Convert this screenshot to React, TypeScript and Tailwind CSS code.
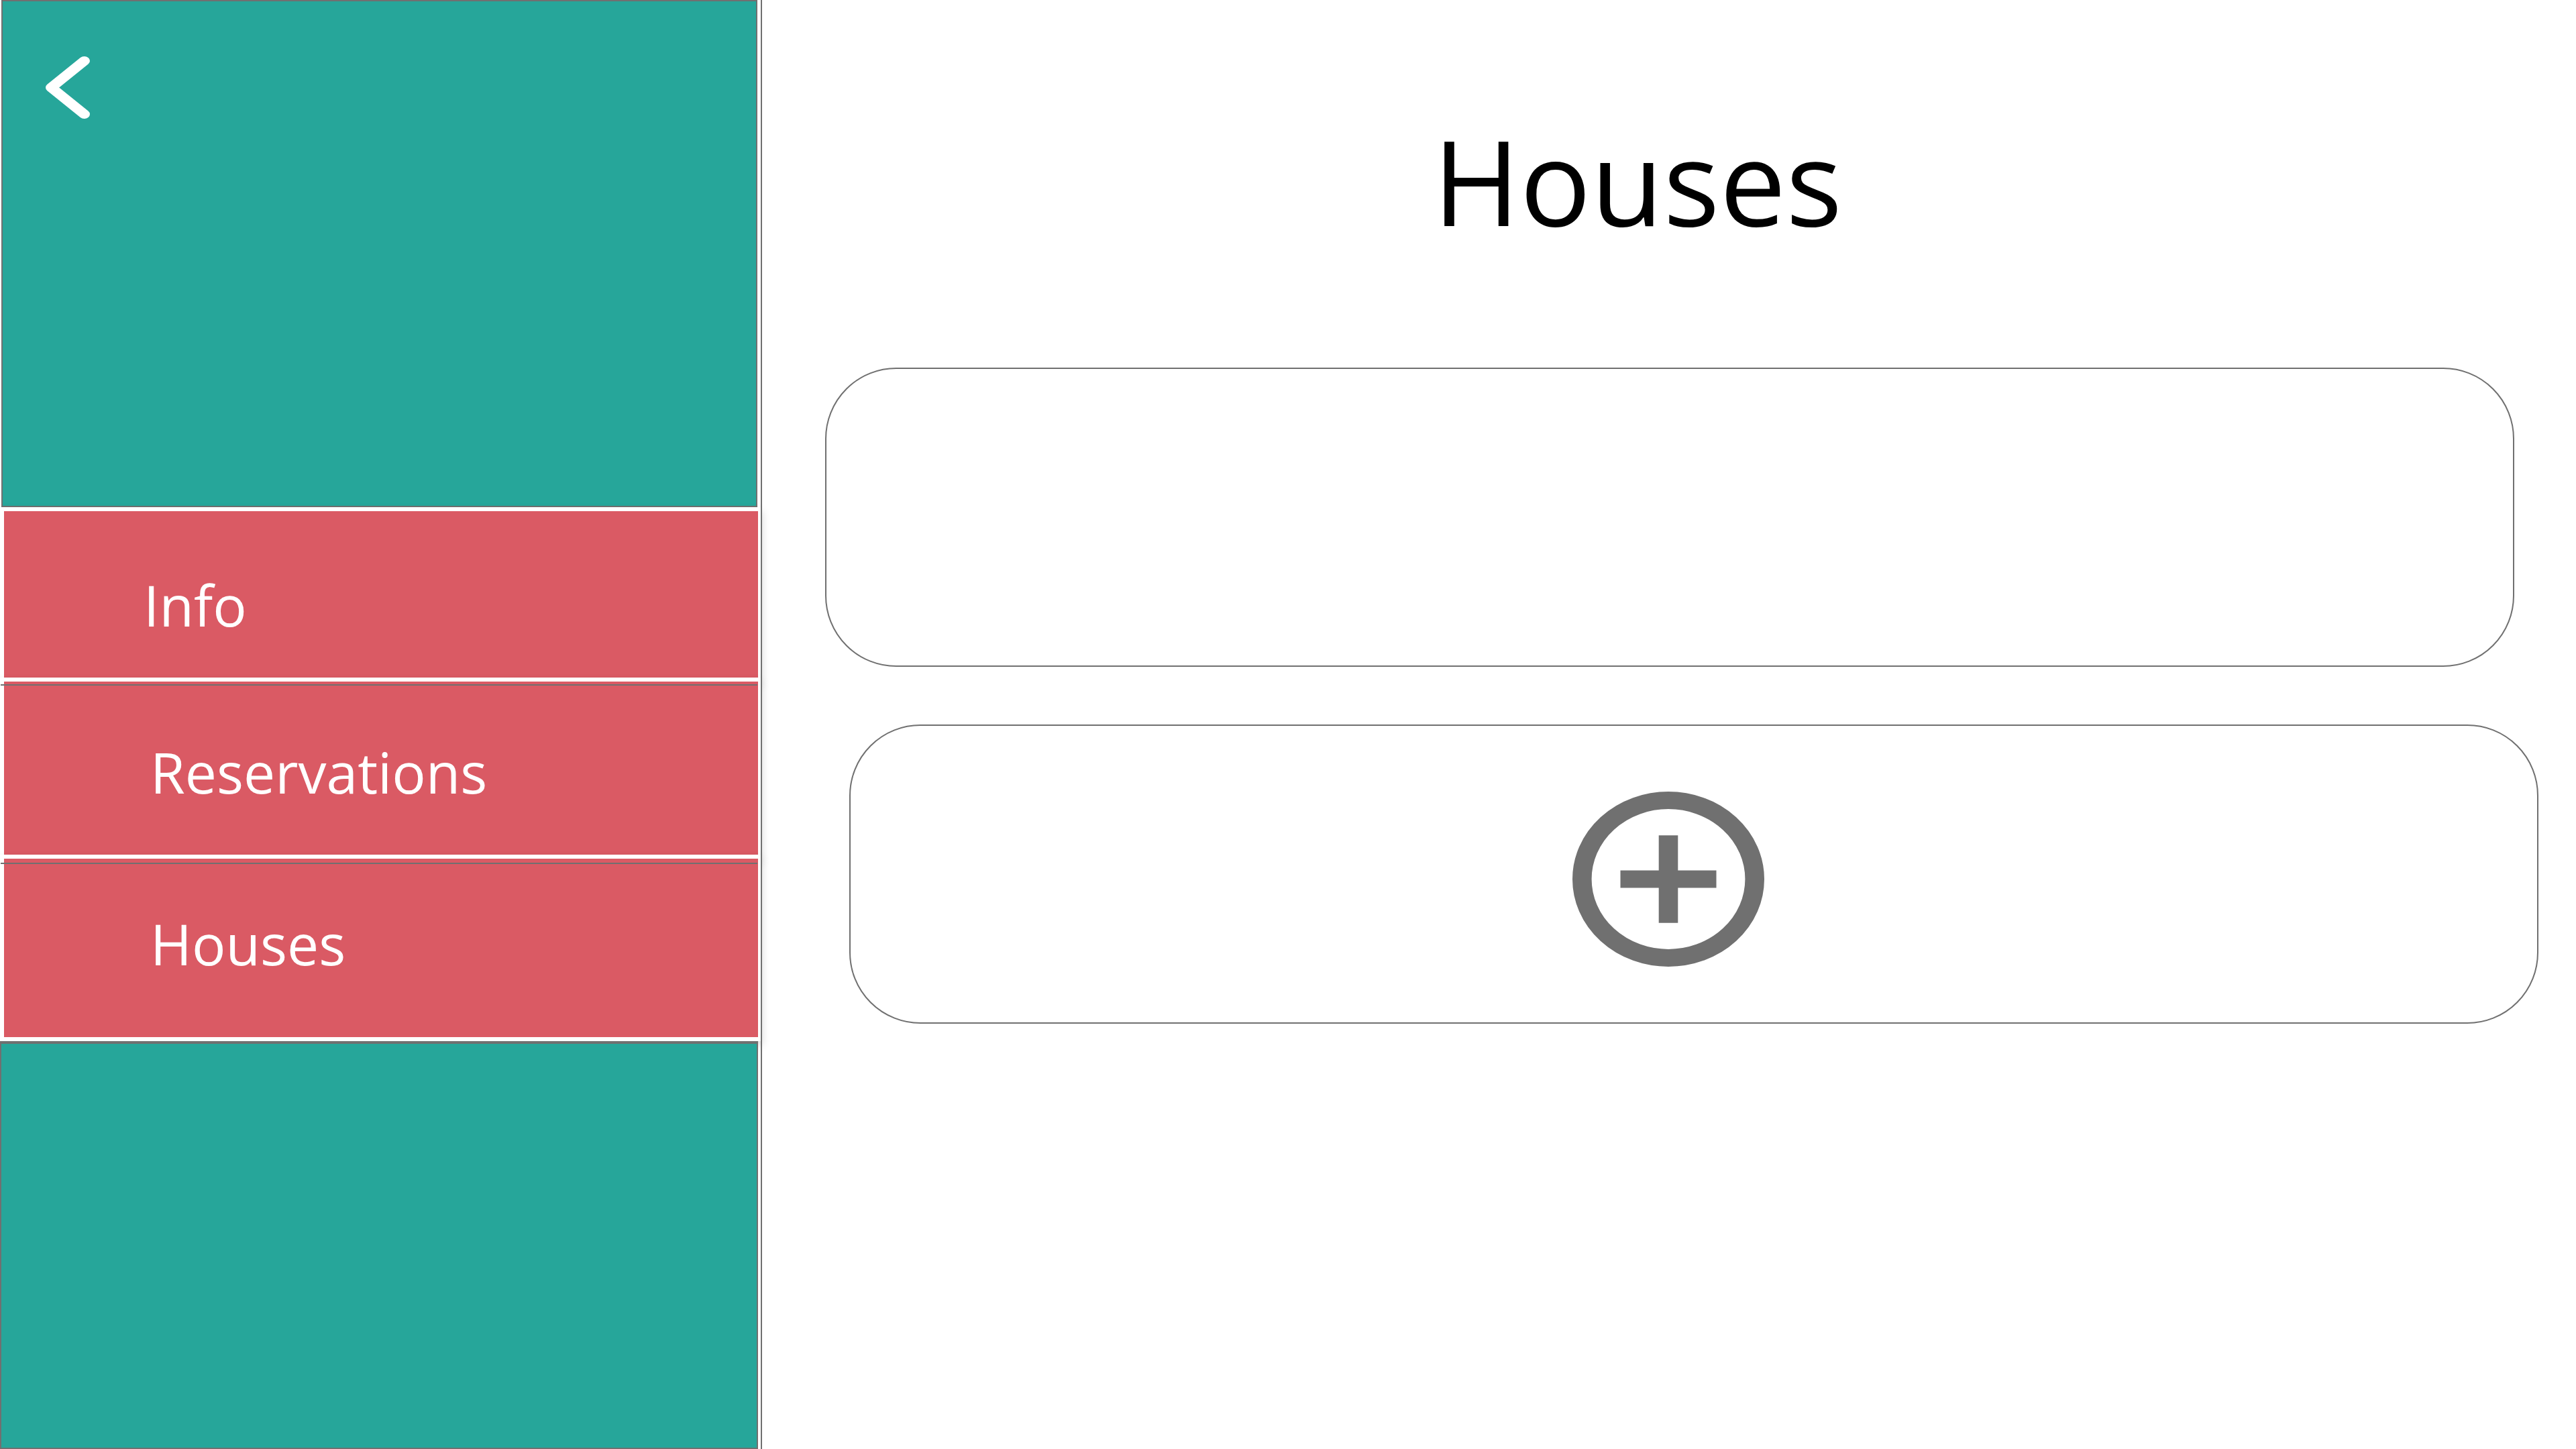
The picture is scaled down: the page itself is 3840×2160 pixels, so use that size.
type NavItem = {
  label: string;
  box: string;
  rule?: string;
};

const navItems: NavItem[] = [
  { label: "Info", box: "h-[260px] pl-[208px] pt-[32px]" },
  { label: "Reservations", box: "-mt-[6px] h-[270px] pl-[218px] pt-[12px]", rule: "top-[4px]" },
  { label: "Houses", box: "-mt-[6px] h-[278px] pl-[218px] pb-[12px]", rule: "top-[6px]" },
];

function BackIcon() {
  return (
    <svg className="h-[93px] w-[66px]" viewBox="0 0 53 93" preserveAspectRatio="none" fill="none" aria-hidden="true">
      <path
        d="M46.3 6.7 6.7 46.5 46.3 86.3"
        stroke="white"
        strokeWidth="13.4"
        strokeLinecap="round"
        strokeLinejoin="round"
      />
    </svg>
  );
}

function AddIcon() {
  return (
    <svg className="h-[261px] w-[286px]" viewBox="0 0 20 20" preserveAspectRatio="none" aria-hidden="true">
      <circle cx="10" cy="10" r="9" fill="none" stroke="#707070" strokeWidth="2" />
      <path d="M9 5h2v4h4v2h-4v4H9v-4H5V9h4z" fill="#707070" />
    </svg>
  );
}

function Sidebar() {
  return (
    <aside className="flex w-[1134px] shrink-0 flex-col">
      <div className="ml-[2px] mr-[5px] h-[756px] border-2 border-[#707070] bg-[#26a69a] pl-[64px] pt-[82px]">
        <button type="button" aria-label="Back" className="block cursor-pointer">
          <BackIcon />
        </button>
      </div>
      <nav className="-mr-[2px] flex flex-col">
        {navItems.map((item) => (
          <a
            key={item.label}
            href={`#${item.label.toLowerCase()}`}
            className={`relative flex items-center border-[6px] border-white bg-[#da5a64] text-[84px] leading-none text-white shadow-[0_6px_12px_rgba(0,0,0,0.16)] ${item.box}`}
          >
            {item.rule && (
              <span className={`absolute -left-[5px] right-[1px] h-[2px] bg-[#707070] ${item.rule}`} />
            )}
            {item.label}
          </a>
        ))}
      </nav>
      <div className="relative mr-[4px] flex-1 border-2 border-t-4 border-[#707070] bg-[#26a69a]" />
    </aside>
  );
}

export default function App() {
  return (
    <div className="flex min-h-screen bg-white font-['Open_Sans',sans-serif]">
      <Sidebar />
      <main className="relative flex min-w-0 flex-1 flex-col border-l-2 border-[#707070]">
        <h1 className="pr-[94px] pt-[181px] text-center text-[176px] leading-none text-black">Houses</h1>
        <section
          aria-label="House"
          className="ml-[94px] mr-[92px] mt-[191px] h-[446px] rounded-[106px] border-2 border-[#707070]"
        />
        <button
          type="button"
          aria-label="Add house"
          className="ml-[130px] mr-[56px] mt-[86px] flex h-[446px] cursor-pointer items-center justify-center rounded-[106px] border-2 border-[#707070] pr-[76px] pt-[14px]"
        >
          <AddIcon />
        </button>
      </main>
    </div>
  );
}
